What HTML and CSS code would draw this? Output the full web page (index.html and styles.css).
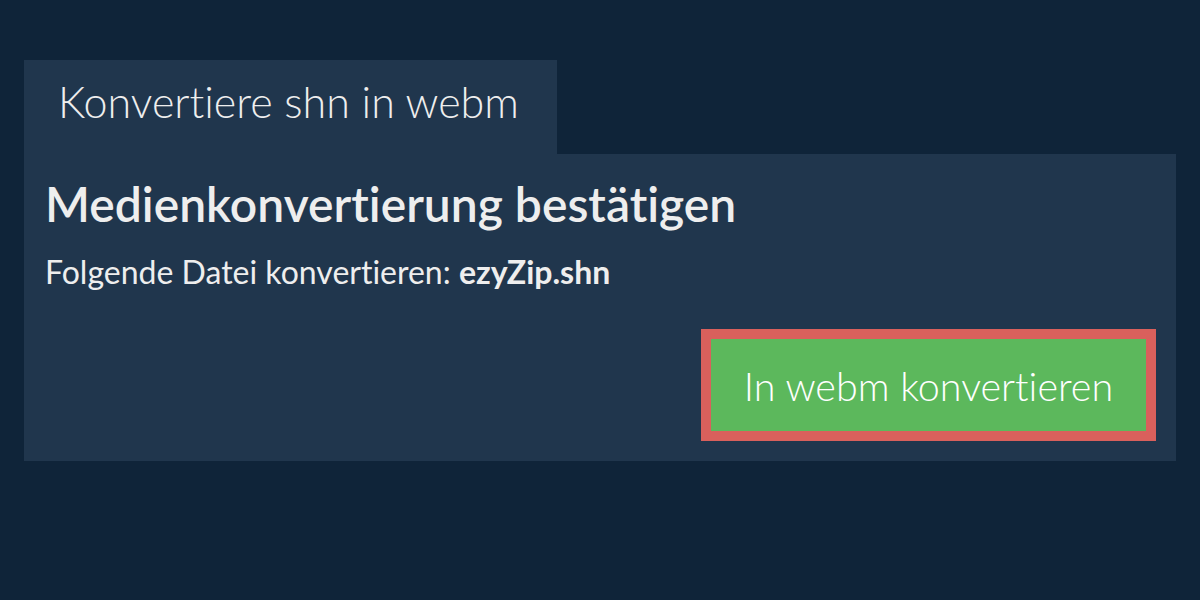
FILE: index.html
```html
<!DOCTYPE html>
<html lang="de">
<head>
<meta charset="utf-8">
<title>Konvertiere shn in webm</title>
<link rel="stylesheet" href="styles.css">
</head>
<body>
<div class="wrap">
  <div class="tab">Konvertiere shn in webm</div>
  <div class="panel">
    <h1 class="heading">Medienkonvertierung bestätigen</h1>
    <p class="sub">Folgende Datei konvertieren: <b>ezyZip.shn</b></p>
    <div class="actions">
      <button class="btn">In webm konvertieren</button>
    </div>
  </div>
</div>
</body>
</html>
```
FILE: styles.css
```css
html, body {
  margin: 0;
  padding: 0;
  background: #0f2439;
  font-family: Lato, "Open Sans", sans-serif;
  font-variant-ligatures: none;
  color: #f0f0f0;
}
.wrap {
  padding: 60px 24px 0 24px;
}
.tab {
  width: 499px;
  height: 94px;
  padding-left: 34px;
  background: #20364d;
  font-weight: 300;
  font-size: 43px;
  line-height: 84px;
  color: #eeeeee;
}
.panel {
  background: #20364d;
  padding: 22px 20px 20px 21px;
  height: 265px;
  box-sizing: content-box;
  display: flex;
  flex-direction: column;
}
.heading {
  margin: 0;
  font-size: 48px;
  font-weight: 600;
  line-height: 56px;
  color: #eeeeee;
}
.sub {
  margin: 22px 0 0 0;
  font-size: 32px;
  line-height: 36px;
  font-weight: 400;
  color: #eeeeee;
}
.sub b {
  font-weight: 700;
}
.actions {
  display: flex;
  justify-content: flex-end;
  margin-top: 39px;
}
.btn {
  width: 455px;
  height: 112px;
  border: 10px solid #d9605c;
  background: #5cb85c;
  color: #ffffff;
  font-family: Lato, "Open Sans", sans-serif;
  font-variant-ligatures: none;
  font-weight: 300;
  font-size: 39.5px;
  padding: 0;
  box-sizing: border-box;
}
```
